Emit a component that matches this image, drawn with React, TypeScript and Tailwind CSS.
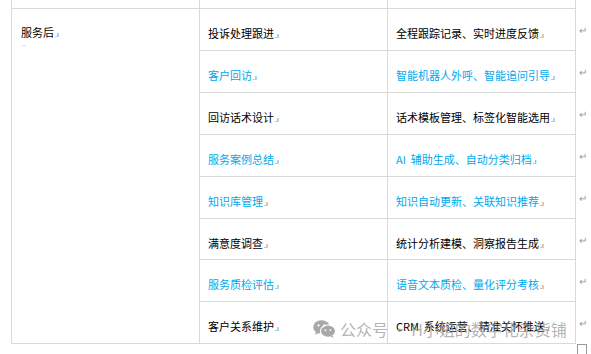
const BLUE = 'text-[#00a8ec]'

const ROWS = [
  { task: '投诉处理跟进', tool: '全程跟踪记录、实时进度反馈', blue: false, h: 'h-[42px]' },
  { task: '客户回访', tool: '智能机器人外呼、智能追问引导', blue: true, h: 'h-[42px]' },
  { task: '回访话术设计', tool: '话术模板管理、标签化智能选用', blue: false, h: 'h-[42px]' },
  { task: '服务案例总结', tool: 'AI  辅助生成、自动分类归档', blue: true, h: 'h-[42px]' },
  { task: '知识库管理', tool: '知识自动更新、关联知识推荐', blue: true, h: 'h-[42px]' },
  { task: '满意度调查', tool: '统计分析建模、洞察报告生成', blue: false, h: 'h-[41px]' },
  { task: '服务质检评估', tool: '语音文本质检、量化评分考核', blue: true, h: 'h-[42px]' },
  { task: '客户关系维护', tool: 'CRM  系统运营、精准关怀推送', blue: false, h: 'h-[42px]' },
]

function CellMark() {
  return <span className="ml-px text-[7px] text-[#666] whitespace-pre">.ı</span>
}

function WeChatIcon() {
  return (
    <svg width="23" height="18" viewBox="0 0 23 18">
      <ellipse cx="8.5" cy="7" rx="8.3" ry="6.8" fill="#a8a8a8" />
      <path d="M3 11.5 L2.2 15 L6 12.8 Z" fill="#a8a8a8" />
      <ellipse cx="15" cy="11.2" rx="7.6" ry="6.2" fill="#a8a8a8" stroke="#fff" strokeWidth="1.2" />
      <path d="M19.5 15.5 L20.6 17.8 L17.2 16.4 Z" fill="#a8a8a8" />
      <circle cx="5.6" cy="5.4" r="1.1" fill="#fff" />
      <circle cx="11.2" cy="5.4" r="1.1" fill="#fff" />
      <circle cx="12.4" cy="10.2" r="0.9" fill="#fff" />
      <circle cx="17.4" cy="10.2" r="0.9" fill="#fff" />
    </svg>
  )
}

export default function App() {
  const line = 'border-[#d9d9d9]'
  return (
    <div className="relative w-[591px] h-[354px] overflow-hidden bg-white" style={{ fontFamily: '"Noto Sans CJK SC", "Noto Sans", sans-serif' }}>
      <div className="ml-[11px] grid grid-cols-[189px_188px_188px_16px]">
        {/* cut-off row above */}
        <div className={`h-[9px] border-l border-r border-b ${line}`} />
        <div className={`h-[9px] border-r border-b ${line}`} />
        <div className={`h-[9px] border-r border-b ${line}`} />
        <div />

        <div className={`row-span-8 border-l border-r border-b ${line} pl-[9px] pt-[16px]`}>
          <div className="text-[11px] leading-[14px] text-black">服务后<CellMark /></div>
          <div className="text-[6px] leading-[6px] text-[#888] pl-px">..</div>
        </div>

        {ROWS.map((r, i) => (
          <div key={i} className="contents">
            <div className={`${r.h} border-r border-b ${line} pl-[8px] pt-[17px] text-[11px] leading-[14px] ${r.blue ? BLUE : 'text-black'}`}>
              {r.task}<CellMark />
            </div>
            <div className={`${r.h} border-r border-b ${line} pl-[8px] pt-[17px] text-[11px] leading-[14px] whitespace-pre ${r.blue ? BLUE : 'text-black'}`}>
              {r.tool}<CellMark />
            </div>
            <div className={`${r.h} pl-[3px] pt-[14px] text-[10px] leading-[14px] text-[#999]`}>↵</div>
          </div>
        ))}
      </div>

      <div className="absolute right-[4px] bottom-0 w-[10px] h-[10px] border border-[#999] border-b-0" />

      <div className="pointer-events-none absolute left-[313px] top-[318px] flex items-center gap-[4px] text-[16px] leading-[22px] text-[#9a9a9a]/75">
        <WeChatIcon />
        <span>公众号 · H小姐的数字化杂货铺</span>
      </div>
    </div>
  )
}
